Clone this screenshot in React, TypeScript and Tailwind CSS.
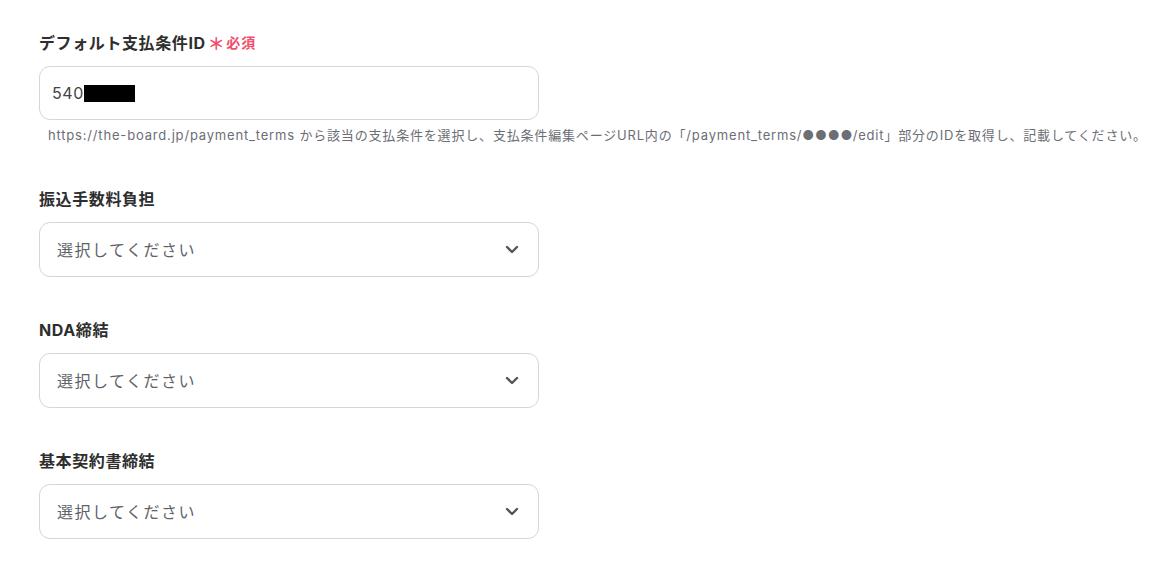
import React from 'react';

const font = { fontFamily: 'Inter, "Noto Sans CJK JP", sans-serif' };

const Chevron: React.FC = () => (
  <svg width="14" height="9" viewBox="0 0 14 9" fill="none" className="shrink-0">
    <path d="M2 2l5 5 5-5" stroke="#555" strokeWidth="2.4" strokeLinecap="round" strokeLinejoin="round" />
  </svg>
);

const Label: React.FC<{ text: string; required?: boolean }> = ({ text, required }) => (
  <div className="flex items-center h-6 text-[16px] font-bold text-[#2e2e2e] leading-6 tracking-[0.6px]">
    <span>{text}</span>
    {required && (
      <span className="ml-[2px] flex items-center text-[#f0506e]">
        <span className="text-[17px] font-bold leading-none mt-[3px]">＊</span>
        <span className="ml-[1px] text-[14px] font-bold tracking-[1px]">必須</span>
      </span>
    )}
  </div>
);

const SelectField: React.FC<{ label: string }> = ({ label }) => (
  <div className="flex flex-col">
    <Label text={label} />
    <div className="mt-[11px] w-[500px] h-[55px] rounded-[11px] border border-[#d4d6dc] bg-white flex items-center justify-between pl-[17px] pr-[19px]">
      <span className="text-[16px] text-[#5f6368] tracking-[1.5px]">選択してください</span>
      <Chevron />
    </div>
  </div>
);

export default function App() {
  return (
    <div className="min-h-screen bg-white pl-[39px] pt-[31px]" style={font}>
      <div className="flex flex-col">
        <Label text="デフォルト支払条件ID" required />
        <div className="mt-[11px] w-[500px] h-[54px] rounded-[11px] border border-[#d4d6dc] bg-white flex items-center pl-[12px]">
          <span className="text-[16px] text-[#444] tracking-[0.6px]">540</span>
          <span className="inline-block w-[51px] h-[17px] bg-black" />
        </div>
        <p className="mt-[5px] pl-[9px] text-[13px] leading-5 text-[#6b6e75] whitespace-nowrap tracking-[0.82px]">
          https://the-board.jp/payment_terms から該当の支払条件を選択し、支払条件編集ページURL内の「/payment_terms/●●●●/edit」部分のIDを取得し、記載してください。
        </p>
      </div>
      <div className="mt-[42px] flex flex-col gap-[41px]">
        <SelectField label="振込手数料負担" />
        <SelectField label="NDA締結" />
        <SelectField label="基本契約書締結" />
      </div>
    </div>
  );
}
